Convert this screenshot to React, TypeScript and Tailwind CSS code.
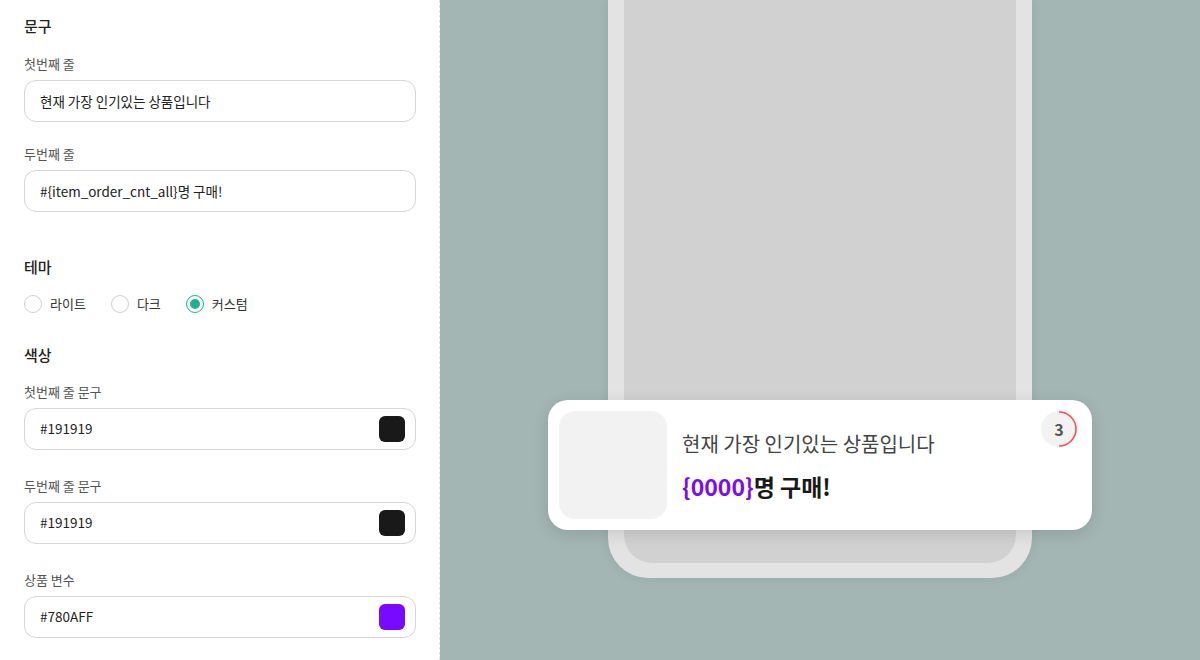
import React from "react";

const font = { fontFamily: '"Noto Sans CJK KR", "Noto Sans", sans-serif' };

function Field({ label, value, swatch }: { label: string; value: string; swatch?: string }) {
    return (
        <div className="flex flex-col">
            <div className="text-[13px] text-[#555] leading-[20px] mb-[6px]">{label}</div>
            <div className="h-[42px] w-[392px] rounded-[12px] border border-[#d6d6d6] bg-white flex items-center justify-between pl-[15px] pr-[10px]">
                <span className="text-[13.5px] text-[#222]">{value}</span>
                {swatch && (
                    <span className="h-[26px] w-[26px] rounded-[6px]" style={{ backgroundColor: swatch }} />
                )}
            </div>
        </div>
    );
}

function Radio({ label, checked }: { label: string; checked?: boolean }) {
    return (
        <label className="flex items-center gap-[8px]">
            <span
                className={
                    "h-[18px] w-[18px] rounded-full border flex items-center justify-center " +
                    (checked ? "border-[#1db38e]" : "border-[#cfcfcf]")
                }
            >
                {checked && <span className="h-[10px] w-[10px] rounded-full bg-[#1db38e]" />}
            </span>
            <span className="text-[13px] text-[#333]">{label}</span>
        </label>
    );
}

export default function App() {
    return (
        <div className="flex h-[660px] w-[1200px] overflow-hidden" style={font}>
            {/* settings panel */}
            <div className="w-[440px] shrink-0 bg-white border-r border-dashed border-[#e6e6e6] pl-[24px] pt-[15px]">
                <h3 className="text-[15px] font-medium text-[#222] leading-[22px] mb-[17px]">문구</h3>
                <div className="flex flex-col gap-[22px]">
                    <Field label="첫번째 줄" value="현재 가장 인기있는 상품입니다" />
                    <Field label="두번째 줄" value="#{item_order_cnt_all}명 구매!" />
                </div>

                <h3 className="text-[15px] font-medium text-[#222] leading-[22px] mt-[44px] mb-[16px]">테마</h3>
                <div className="flex items-center gap-[25px]">
                    <Radio label="라이트" />
                    <Radio label="다크" />
                    <Radio label="커스텀" checked />
                </div>

                <h3 className="text-[15px] font-medium text-[#222] leading-[22px] mt-[30px] mb-[16px]">색상</h3>
                <div className="flex flex-col gap-[26px]">
                    <Field label="첫번째 줄 문구" value="#191919" swatch="#191919" />
                    <Field label="두번째 줄 문구" value="#191919" swatch="#191919" />
                    <Field label="상품 변수" value="#780AFF" swatch="#780AFF" />
                </div>
            </div>

            {/* preview */}
            <div className="flex-1 bg-[#a3b6b4] flex justify-center">
                <div className="relative h-[578px] w-[424px] rounded-b-[40px] bg-[#e3e3e3] px-[16px] pb-[15px] shadow-[0_0_12px_rgba(0,0,0,0.08)]">
                    <div className="h-full w-full rounded-b-[28px] bg-[#d1d1d1]" />

                    <div className="absolute left-[-60px] top-[400px] h-[130px] w-[544px] rounded-[20px] bg-white shadow-[0_4px_16px_rgba(0,0,0,0.12)] flex items-center pl-[11px]">
                        <div className="h-[108px] w-[108px] rounded-[16px] bg-[#f2f2f2]" />
                        <div className="ml-[15px] flex flex-col gap-[12px]">
                            <div className="text-[20px] text-[#444] leading-[30px]">현재 가장 인기있는 상품입니다</div>
                            <div className="text-[23px] font-bold text-[#191919] leading-[30px]">
                                <span className="text-[#780aff]">{"{0000}"}</span>명 구매!
                            </div>
                        </div>
                        <div className="absolute right-[15px] top-[11px] h-[36px] w-[36px] rounded-full bg-[#f2f2f2] flex items-center justify-center">
                            <span className="text-[16px] font-bold text-[#555]">3</span>
                            <svg className="absolute inset-0" width="36" height="36" viewBox="0 0 36 36" fill="none">
                                <path d="M18 1 A17 17 0 0 1 18 35" stroke="#ff4f4f" strokeWidth="1.6" />
                            </svg>
                        </div>
                    </div>
                </div>
            </div>
        </div>
    );
}
